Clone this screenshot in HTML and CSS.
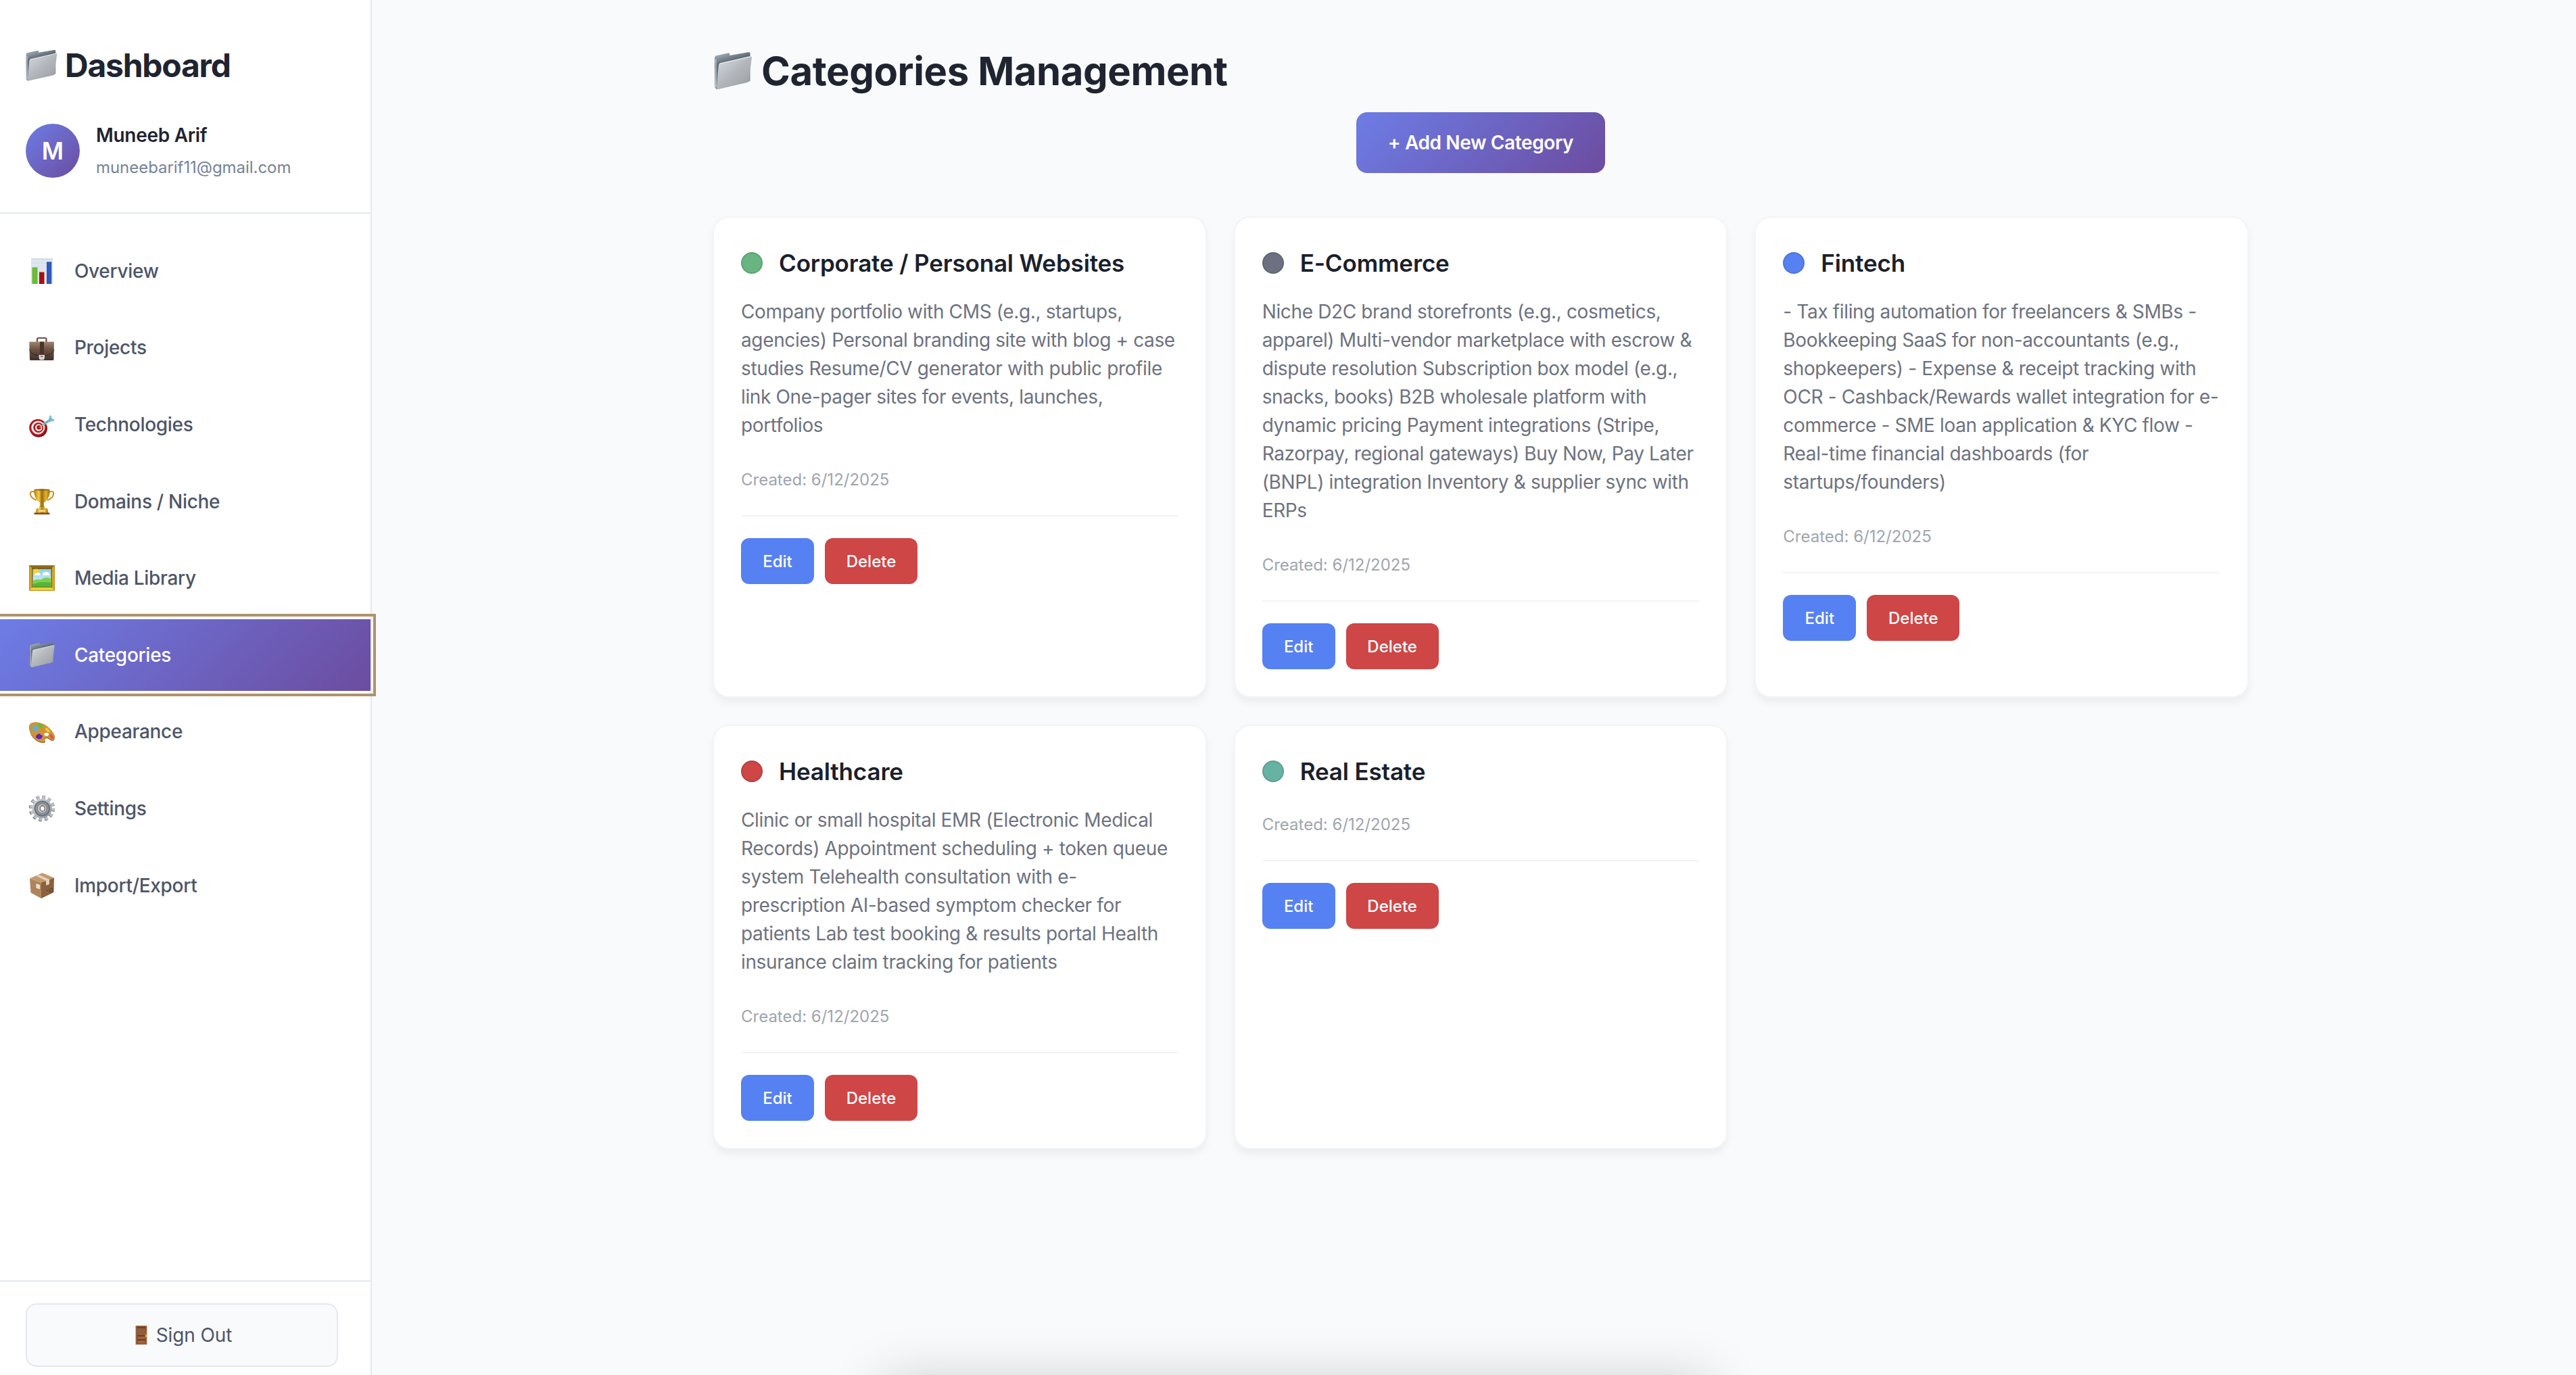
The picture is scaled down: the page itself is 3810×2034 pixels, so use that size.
FILE: index.html
```html
<!DOCTYPE html>
<html lang="en">
<head>
<meta charset="utf-8">
<title>Categories Management</title>
<link rel="stylesheet" href="styles.css">
</head>
<body>
<svg class="defs" aria-hidden="true">
  <defs>
    <linearGradient id="gFront" x1="0" y1="0" x2="0.9" y2="1"><stop offset="0" stop-color="#d9dde3"/><stop offset="0.5" stop-color="#b4b8bd"/><stop offset="1" stop-color="#9a9da1"/></linearGradient>
    <linearGradient id="gBack" x1="0" y1="0" x2="0.3" y2="1"><stop offset="0" stop-color="#b9c2ca"/><stop offset="0.35" stop-color="#5d6973"/><stop offset="1" stop-color="#8d98a1"/></linearGradient>
    <linearGradient id="gCase" x1="0" y1="0" x2="0" y2="1"><stop offset="0" stop-color="#a08670"/><stop offset="0.4" stop-color="#6d5344"/><stop offset="1" stop-color="#43302a"/></linearGradient>
    <linearGradient id="gGold" x1="0" y1="0" x2="1" y2="0"><stop offset="0" stop-color="#b37a0c"/><stop offset="0.3" stop-color="#f3cf4a"/><stop offset="0.5" stop-color="#9a6a10"/><stop offset="0.75" stop-color="#e2b42c"/><stop offset="1" stop-color="#9c6a0c"/></linearGradient>
    <linearGradient id="gSky" x1="0" y1="0" x2="0" y2="1"><stop offset="0" stop-color="#8fd0ee"/><stop offset="1" stop-color="#e6f3f8"/></linearGradient>
    <linearGradient id="gGear" x1="0" y1="0" x2="1" y2="1"><stop offset="0" stop-color="#d5dae0"/><stop offset="1" stop-color="#8d949c"/></linearGradient>
    <symbol id="folder" viewBox="0 0 40 40">
      <path d="M2 6.500 3 5l13-2.800 .8 .4v2l19.200-3.300 1 .8V30L6 37.600 3.600 38 2.200 36z" fill="url(#gBack)"/>
      <path d="M7 12.700 37.400 5.700q1.400-.2 1.200 1.100L35.600 30q-.2 1-1.200 1.300L5 38q-1.200.3-1-.9L5.900 14q.1-1 1.100-1.300z" fill="url(#gFront)"/>
      <path d="M7 12.700 37.400 5.700" stroke="#eceff3" stroke-width=".8" fill="none"/>
      <path d="M3.200 8.500v27.500" stroke="#d7dde2" stroke-width=".8"/>
    </symbol>
  </defs>
</svg>
<div class="app">
  <aside class="sidebar">
    <div class="profile">
      <h2 class="brand"><svg class="brand-icon"><use href="#folder"/></svg><span>Dashboard</span></h2>
      <div class="user">
        <div class="avatar">M</div>
        <div class="user-text">
          <span class="user-name">Muneeb Arif</span>
          <span class="user-mail">muneebarif11@gmail.com</span>
        </div>
      </div>
    </div>
    <nav class="nav">
      <a class="nav-item"><svg class="nav-icon" viewBox="0 0 40 40"><path d="M4 1.500h32v37.500H4z" fill="#dfe6ef"/><path d="M4 1.500h32v1.200H4z" fill="#c8cfd9"/><path d="M4 8h32M4 14h32M4 20h32M4 26h32M4 32h32" stroke="#cfd8e4" stroke-width=".6"/><path d="M5.500 14.500h8V39h-8z" fill="#6bbd33"/><path d="M16 21.500h7.500V39H16z" fill="#a90f12"/><path d="M27 6.300h7.300V39H27z" fill="#3059bd"/></svg><span>Overview</span></a>
      <a class="nav-item"><svg class="nav-icon" viewBox="0 0 40 40"><path d="M13 12V8q0-2 2-2h9.500q2 0 2 2v4" fill="none" stroke="#6a5142" stroke-width="2.200"/><path d="M2.500 11.500h34.500q1 0 1 1l-.5 25q0 1.500-1.500 1.500H3.500Q2 39 2 37.500l-.7-25q0-1 1.200-1z" fill="url(#gCase)"/><path d="M1.500 23q3 8 12 8.500h13Q35 31 38 23" fill="none" stroke="#34241e" stroke-width="1"/><path d="M17 11.500h6V31h-6z" fill="#4b352b"/><path d="M15.500 31h8.500v4q0 3.500-4.200 3.500T15.500 35z" fill="#d9d9da"/><path d="M18 32h3.500v2.500H18z" fill="#8f8a88"/></svg><span>Projects</span></a>
      <a class="nav-item"><svg class="nav-icon" viewBox="0 0 40 40"><ellipse cx="15" cy="25.700" rx="13" ry="13" fill="#7d0c13"/><ellipse cx="14" cy="24.500" rx="12.800" ry="12.500" fill="#b5161e"/><ellipse cx="14.300" cy="24.500" rx="10" ry="10" fill="#f6f0f0"/><ellipse cx="14.800" cy="24.500" rx="7.500" ry="7.600" fill="#b5161e"/><ellipse cx="15.200" cy="24.500" rx="5.200" ry="5.300" fill="#f6f0f0"/><ellipse cx="15.500" cy="24.300" rx="3.200" ry="3.300" fill="#b5161e"/><path d="M16.500 24.300 22 20" stroke="#c9a13c" stroke-width="1.600"/><path d="m20 21 2.500-4L30 12.500 31 7l3-.5.5 4.500 4.300 1.500-1.300 2.500-5.500 1L24 20.500z" fill="#7cc5d0"/><path d="m22.500 19.500 12-8.500" stroke="#4e9dab" stroke-width="1"/></svg><span>Technologies</span></a>
      <a class="nav-item"><svg class="nav-icon" viewBox="0 0 40 40"><path d="M9.500 6Q2 3 3 9.500 4 15 12 18M30.500 6Q38 3 37 9.500 36 15 28 18" fill="none" stroke="#c8921f" stroke-width="2"/><path d="M8.500 2h23q.5 9-3 14-3 4.500-5.500 5.500-1 4 2 8h-10q3-4 2-8-2.500-1-5.500-5.500-3.500-5-3-14z" fill="url(#gGold)"/><ellipse cx="20" cy="2.500" rx="11.400" ry="1.200" fill="#8b5c0c"/><path d="M12 30h16l1.500 7h-19z" fill="url(#gGold)"/><path d="M8.500 36.500h23V39h-23z" fill="#8c4a1c"/><path d="M15 32h10v3.500H15z" fill="#f0d468"/></svg><span>Domains / Niche</span></a>
      <a class="nav-item"><svg class="nav-icon" viewBox="0 0 40 40"><path d="M1 1h38v37.800H1z" fill="#d9a720"/><path d="m1 1 5.500 5.500h27L39 1z" fill="#8c6a1d"/><path d="m1 38.800 5.500-5.500h27l5.500 5.500z" fill="#f2d23d"/><path d="M1.500 1.500h37v36.800h-37z" fill="none" stroke="#b88a1b"/><path d="M5 5h30v29H5z" fill="#7b6420"/><path d="M6.500 7h27v26h-27z" fill="url(#gSky)"/><circle cx="11.500" cy="10.500" r="4" fill="#f3d52f"/><path d="M9 16q0-3 4-3.500 4-1.500 5 3.500zM21 16q0-5 5-5 5 0 5.500 5z" fill="#fff"/><path d="M6.500 24q6-3 12-1.500Q26 17 33.500 21v12h-27z" fill="#7bd04a"/><path d="M6.500 29q12-5 27-2v6h-27z" fill="#55b53a"/></svg><span>Media Library</span></a>
      <a class="nav-item active"><svg class="nav-icon"><use href="#folder"/></svg><span>Categories</span></a>
      <a class="nav-item"><svg class="nav-icon" viewBox="0 0 40 40"><path d="M1.300 14C1.300 9 6 7 12 7.300 24 8 34 17 38.500 26 40 32 37 35 33.500 33.500 31 32 28 28.500 25 30.500 22.500 32.500 27 35 24 36.800 16 38 8 32 4.500 26 2.300 21.500 1.300 18 1.300 14z" fill="#80531c"/><path d="M1 13C1 8 6 6 12 6.300 24 7 34 16 38.300 25 40 31 37 34 33.500 32.500 31 31 28 27.500 25 29.500 22.500 31.500 27 34 24 35.800 16 37 8 31 4.500 25 2 20.500 1 17 1 13z" fill="#cc943a"/><ellipse cx="26.800" cy="24.300" rx="3.300" ry="2.400" fill="#fff"/><path d="m5.500 14 3-3 4 1 2 4.500-3 3.500-4.500-2z" fill="#57b3dc"/><path d="m14 8.500 4-.3 3.500 4-2 3-4.500-1.500z" fill="#62c12c"/><path d="m25 14.500 4 1 3.500 5-3.500.5-3.500-3z" fill="#efcf28"/><path d="m31.500 24 3.500 1 2.500 4.500-1.500 2-3.500-3z" fill="#e2514a"/><path d="m11.500 26 4-3 5.500 3.500-1.500 4-4.500 1-4-2.500z" fill="#6a1fae"/></svg><span>Appearance</span></a>
      <a class="nav-item"><svg class="nav-icon" viewBox="0 0 40 40"><circle cx="20" cy="20" r="16.400" fill="none" stroke="#6c625e" stroke-width="5.500" stroke-dasharray="4.300 4.290"/><circle cx="20.500" cy="19.600" r="16.200" fill="none" stroke="#b9c0c8" stroke-width="5" stroke-dasharray="4 4.480"/><circle cx="20" cy="20" r="14.500" fill="url(#gGear)"/><circle cx="20.300" cy="20" r="10.800" fill="#8f959b" stroke="#666c72" stroke-width="1.600"/><circle cx="20.300" cy="20" r="7" fill="#bfc5cb" stroke="#747a80"/><ellipse cx="20.800" cy="20" rx="3.500" ry="4" fill="#fff" stroke="#6b6460" stroke-width="1.300"/></svg><span>Settings</span></a>
      <a class="nav-item"><svg class="nav-icon" viewBox="0 0 40 40"><path d="M20.500 1.300 38 8.500 19 15.500 2 9.500z" fill="#c39a6d"/><path d="M2 9.500 19 15.500V39L3.500 30.500z" fill="#b0845a"/><path d="M38 8.500 19 15.500V39l18.500-9z" fill="#8a613c"/><path d="m11 5.500 4-1.800L31 11v7l-5 1.800v-7z" fill="#e2d2bd"/><path d="m11.500 17 5.500 2v6.500l-5.500-2z" fill="#e8e2da"/><path d="m27 28 3.500-1.500M32 25l4-1.500v5l-4 1.700z" stroke="#5d3f25" fill="none"/></svg><span>Import/Export</span></a>
    </nav>
    <div class="sidebar-foot">
      <button class="sign-out"><svg class="door" viewBox="0 0 28 28"><path d="M5.600 0h16.800v28H5.600z" fill="#9a6544"/><path d="M7 1.500h14v25H7z" fill="#875433"/><path d="M8 3h12v11H8z" fill="#925d3c"/><path d="M8 3h12M8 15h12M8 21h12" stroke="#633b24" stroke-width="1.400"/><path d="M8.500 16.500h11v3h-11zM8.500 22.500h11v3h-11z" fill="#a4663f"/><path d="M19.800 13h2.600v4h-2.600z" fill="#d9b53d"/></svg><span>Sign Out</span></button>
    </div>
  </aside>
  <main class="main">
    <div class="container">
      <h1 class="page-title"><svg class="title-icon"><use href="#folder"/></svg><span>Categories Management</span></h1>
      <button class="add">+ Add New Category</button>
      <section class="grid">
        <article class="card">
          <header class="card-head"><i class="dot green"></i><h3>Corporate / Personal Websites</h3></header>
          <p class="desc">Company portfolio with CMS (e.g., startups,<br>agencies) Personal branding site with blog + case<br>studies Resume/CV generator with public profile<br>link One-pager sites for events, launches,<br>portfolios</p>
          <div class="created">Created: 6/12/2025</div>
          <footer class="actions"><button class="btn edit">Edit</button><button class="btn delete">Delete</button></footer>
        </article>
        <article class="card">
          <header class="card-head"><i class="dot gray"></i><h3>E-Commerce</h3></header>
          <p class="desc">Niche D2C brand storefronts (e.g., cosmetics,<br>apparel) Multi-vendor marketplace with escrow &amp;<br>dispute resolution Subscription box model (e.g.,<br>snacks, books) B2B wholesale platform with<br>dynamic pricing Payment integrations (Stripe,<br>Razorpay, regional gateways) Buy Now, Pay Later<br>(BNPL) integration Inventory &amp; supplier sync with<br>ERPs</p>
          <div class="created">Created: 6/12/2025</div>
          <footer class="actions"><button class="btn edit">Edit</button><button class="btn delete">Delete</button></footer>
        </article>
        <article class="card">
          <header class="card-head"><i class="dot blue"></i><h3>Fintech</h3></header>
          <p class="desc">- Tax filing automation for freelancers &amp; SMBs -<br>Bookkeeping SaaS for non-accountants (e.g.,<br>shopkeepers) - Expense &amp; receipt tracking with<br>OCR - Cashback/Rewards wallet integration for e-<br>commerce - SME loan application &amp; KYC flow -<br>Real-time financial dashboards (for<br>startups/founders)</p>
          <div class="created">Created: 6/12/2025</div>
          <footer class="actions"><button class="btn edit">Edit</button><button class="btn delete">Delete</button></footer>
        </article>
        <article class="card">
          <header class="card-head"><i class="dot red"></i><h3>Healthcare</h3></header>
          <p class="desc">Clinic or small hospital EMR (Electronic Medical<br>Records) Appointment scheduling + token queue<br>system Telehealth consultation with e-<br>prescription AI-based symptom checker for<br>patients Lab test booking &amp; results portal Health<br>insurance claim tracking for patients</p>
          <div class="created">Created: 6/12/2025</div>
          <footer class="actions"><button class="btn edit">Edit</button><button class="btn delete">Delete</button></footer>
        </article>
        <article class="card">
          <header class="card-head"><i class="dot teal"></i><h3>Real Estate</h3></header>
          <div class="created">Created: 6/12/2025</div>
          <footer class="actions"><button class="btn edit">Edit</button><button class="btn delete">Delete</button></footer>
        </article>
      </section>
    </div>
  </main>
</div>
<div class="sheet-shadow"></div>
</body>
</html>
```
FILE: styles.css
```css
* { box-sizing: border-box; }

body {
  margin: 0;
  width: 3810px;
  height: 2034px;
  overflow: hidden;
  position: relative;
  background: #f9fafc;
  color: #1f2430;
  font-family: Inter, "Liberation Sans", sans-serif;
  font-size: 28px;
}

h1, h2, h3, p { margin: 0; }
button { font-family: inherit; border: 0; }
.defs { position: absolute; width: 0; height: 0; }

.app { display: flex; height: 2034px; }

/* Sidebar */
.sidebar {
  width: 550px;
  flex: none;
  display: flex;
  flex-direction: column;
  background: #fff;
  border-right: 2px solid #e3e8f1;
}

.profile {
  height: 316px;
  flex: none;
  padding: 60px 38px 0;
  border-bottom: 2px solid #e3e8f1;
}

.brand {
  display: flex;
  align-items: center;
  gap: 10px;
  height: 73px;
  font-size: 48px;
  font-weight: 700;
  letter-spacing: -1.25px;
}
.brand-icon { width: 50px; height: 50px; margin-left: -2px; }

.user { display: flex; align-items: center; gap: 24px; margin-top: 46px; }
.avatar {
  width: 80px;
  height: 80px;
  border-radius: 50%;
  display: flex;
  align-items: center;
  justify-content: center;
  color: #fff;
  font-size: 35px;
  font-weight: 600;
  background: linear-gradient(135deg, #6d7de6, #6c4c9f);
}
.user-text { display: flex; flex-direction: column; gap: 10px; padding-top: 2px; }
.user-name { font-size: 28px; line-height: 38px; font-weight: 600; letter-spacing: -0.3px; }
.user-mail { font-size: 24px; line-height: 38px; letter-spacing: -0.05px; color: #76839a; }

.nav { flex: 1; display: flex; flex-direction: column; gap: 8px; padding-top: 32px; }
.nav-item {
  display: flex;
  align-items: center;
  gap: 27.5px;
  height: 105.6px;
  padding-left: 42.4px;
  font-weight: 500;
  letter-spacing: -0.3px;
  color: #4d5568;
}
.nav-icon { width: 40px; height: 40px; }
.nav-item.active {
  color: #fff;
  background: linear-gradient(135deg, #6d7de6, #6c4c9f);
  outline: 4px solid #ae936b;
  outline-offset: 4px;
  z-index: 1;
}

.sidebar-foot { height: 140px; padding: 32px 48px 0 38px; border-top: 2px solid #e3e8f1; }
.sign-out {
  width: 100%;
  height: 94px;
  display: flex;
  align-items: center;
  justify-content: center;
  gap: 8px;
  border: 2px solid #e3e8f1;
  border-radius: 16px;
  background: #f9fafc;
  color: #4d5568;
  font-size: 28px;
  letter-spacing: -0.1px;
}
.door { width: 28px; height: 28px; }

/* Main column */
.main { flex: 1; padding: 60px 0 0 20px; }
.container { width: 2272px; margin: 0 auto; display: flex; flex-direction: column; }
.page-title {
  display: flex;
  align-items: center;
  gap: 12px;
  height: 90px;
  font-size: 58px;
  font-weight: 700;
  letter-spacing: -0.4px;
}
.title-icon { width: 60px; height: 60px; }
.add {
  align-self: center;
  width: 368px;
  height: 90px;
  margin: 16px 0 64px;
  padding: 0;
  border-radius: 16px;
  color: #fff;
  font-size: 28px;
  font-weight: 600;
  letter-spacing: -0.38px;
  background: linear-gradient(135deg, #6d7de6, #6c4c9f);
}

.grid { display: grid; grid-template-columns: repeat(3, minmax(0, 1fr)); gap: 40px; }
.card {
  padding: 40px;
  border: 2px solid #f3f4f6;
  border-radius: 24px;
  background: #fff;
  box-shadow: 0 8px 12px rgba(0, 0, 0, 0.05);
}
.card-head { display: flex; align-items: center; gap: 24px; height: 54px; margin-bottom: 24px; }
.card-head h3 { font-size: 35px; font-weight: 600; letter-spacing: -0.15px; color: #1a202c; }
.dot { width: 32px; height: 32px; border-radius: 50%; border: 2px solid rgba(0, 0, 0, 0.1); }
.green { background-color: #69b581; }
.gray { background-color: #6b7180; }
.blue { background-color: #5681f2; }
.red { background-color: #ce4646; }
.teal { background-color: #66b2a3; }

.desc {
  margin-bottom: 32px;
  font-size: 28px;
  line-height: 42px;
  letter-spacing: -0.36px;
  white-space: nowrap;
  color: #6d7280;
}
.created { padding-top: 10px; font-size: 24px; line-height: 36px; color: #a0a5af; }
.actions { display: flex; gap: 16px; margin-top: 34px; padding-top: 32px; border-top: 2px solid #f3f4f6; }
.btn { height: 68px; padding: 0; border-radius: 12px; color: #fff; font-size: 24px; font-weight: 500; }
.edit { width: 108px; background: #5681f2; }
.delete { width: 137px; background: #ce4646; }

/* Shadow of the sheet resting below the viewport */
.sheet-shadow {
  position: absolute;
  left: 1205px;
  bottom: 0;
  width: 1425px;
  height: 94px;
  overflow: hidden;
}
.sheet-shadow::after {
  content: "";
  display: block;
  height: 200px;
  margin: 100px 100px 0;
  box-shadow: 0 0 80px rgba(0, 0, 0, 0.18);
}
```
